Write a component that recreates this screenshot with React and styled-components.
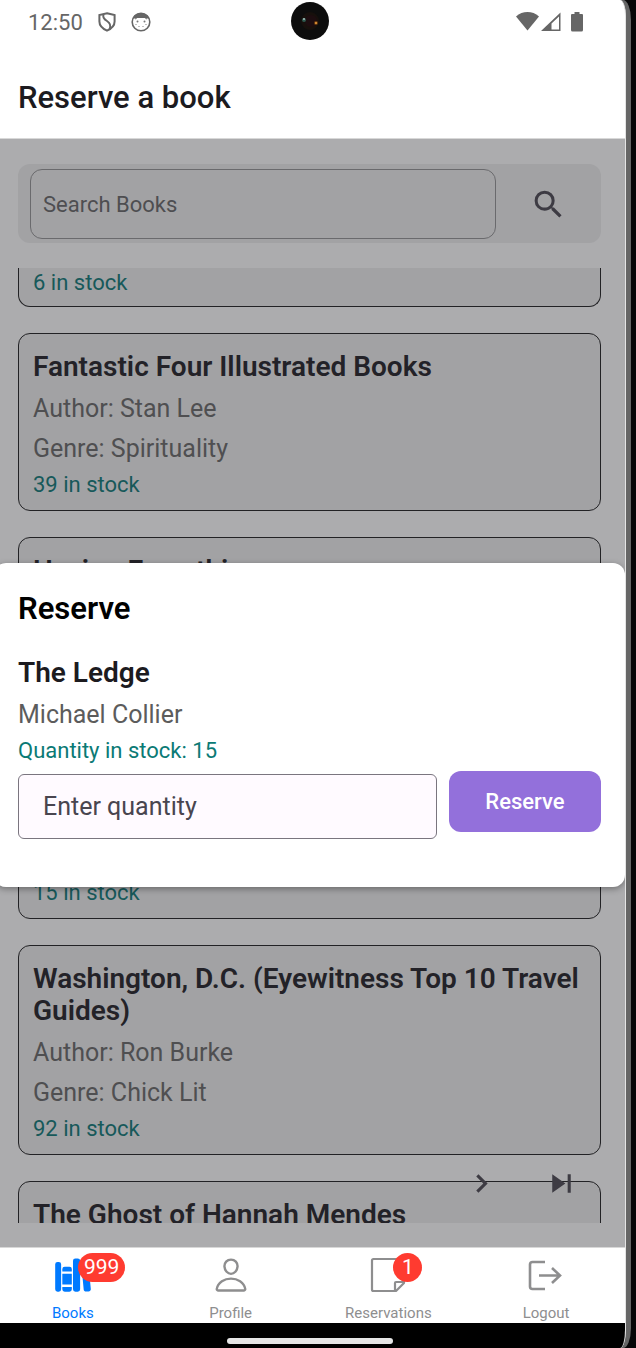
import React from "react";
import styled, { createGlobalStyle } from "styled-components";
import { MdSearch, MdChevronRight, MdSkipNext } from "react-icons/md";
import { IoLibrary, IoPersonOutline } from "react-icons/io5";

const GlobalStyle = createGlobalStyle`
  *, *::before, *::after { box-sizing: border-box; }
  body {
    margin: 0;
    background: #070708;
    font-family: Roboto, "Liberation Sans", sans-serif;
    overflow: hidden;
  }
  h1, h2, h3, p { margin: 0; }
`;

const Device = styled.div`
  height: 100vh;
  margin: 0 5px 0 -6px;
  padding-right: 5px;
  background: #666;
  border-radius: 0 8px 8px 0 / 0 20px 20px 0;
`;

const Screen = styled.div`
  position: relative;
  height: 100%;
  display: flex;
  flex-direction: column;
  overflow: hidden;
  background: #fff;
  border-right: 1px solid #e4e4e4;
  border-radius: 0 6px 6px 0 / 0 16px 18px 0;
`;

const StatusBar = styled.div`
  display: flex;
  align-items: center;
  justify-content: space-between;
  height: 44px;
  padding: 0 42px 0 34px;
  color: #666;
  font-size: 22px;
`;

const StatusGroup = styled.div`
  display: flex;
  align-items: center;
  gap: ${(p) => p.$gap}px;
`;

const Camera = styled.svg`
  position: absolute;
  top: 2px;
  left: 50%;
  margin-left: -19px;
`;

const Header = styled.header`
  flex: none;
  height: 95px;
  padding: 38px 24px 0;
  border-bottom: 1px solid #d8d8d8;
`;

const HeaderTitle = styled.h1`
  color: #1c1b1f;
  font-size: 31px;
  line-height: 32px;
  font-weight: 500;
`;

const Content = styled.main`
  position: relative;
  flex: 1;
  min-height: 0;
  display: flex;
  flex-direction: column;
  gap: 25px;
  padding: 25px 24px 24px;
  background: #acacae;
`;

const SearchBar = styled.form`
  display: flex;
  flex: none;
  height: 79px;
  padding: 5px 0 4px 12px;
  background: #a2a2a4;
  border-radius: 12px;
`;

const SearchInput = styled.input`
  flex: 1;
  min-width: 0;
  padding: 0 12px;
  background: transparent;
  border: 1px solid #6a6a6d;
  border-radius: 12px;
  font: 22px Roboto, sans-serif;
  color: #4e4e51;
  &::placeholder { color: #4e4e51; opacity: 1; }
`;

const IconButton = styled.button`
  display: grid;
  place-items: center;
  width: ${(p) => p.$width}px;
  padding: 0;
  border: 0;
  background: none;
  color: #3d3b43;
`;

const BookList = styled.ul`
  flex: 1;
  min-height: 0;
  display: flex;
  flex-direction: column;
  gap: 26px;
  margin: 0;
  padding: 0;
  overflow: hidden;
  list-style: none;
`;

const Card = styled.li`
  flex: none;
  display: flex;
  flex-direction: column;
  min-height: ${(p) => (p.$continued ? 39 : 178)}px;
  padding: ${(p) => (p.$continued ? 0 : 17)}px 14px 9px;
  background: #a2a2a4;
  border: 1px solid #222225;
  border-top-width: ${(p) => (p.$continued ? 0 : 1)}px;
  border-radius: ${(p) => (p.$continued ? "0 0 12px 12px" : "12px")};
`;

const BookTitle = styled.h3`
  margin-bottom: 6px;
  color: ${(p) => (p.$bright ? "#1c1b1f" : "#232228")};
  font-size: 28px;
  line-height: 32px;
  font-weight: 600;
`;

const BookDetail = styled.p`
  color: ${(p) => (p.$bright ? "#5c5c5c" : "#4f4f51")};
  font-size: 25px;
  line-height: 40px;
`;

const Stock = styled.p`
  margin-top: auto;
  color: ${(p) => (p.$bright ? "#0b7a75" : "#17595a")};
  font-size: 22px;
  line-height: ${(p) => (p.$continued ? 28 : 32)}px;
`;

const Pager = styled.div`
  position: absolute;
  right: 24px;
  bottom: 44px;
  display: flex;
  height: 40px;
`;

const ModalLayer = styled.div`
  position: absolute;
  inset: 0;
  display: flex;
  align-items: flex-end;
  padding-bottom: 360px;
  pointer-events: none;
`;

const Modal = styled.section`
  flex: 1;
  padding: 30px 24px 48px;
  background: #fff;
  border-radius: 12px;
  box-shadow: 0 2px 6px rgba(0, 0, 0, 0.35);
  pointer-events: auto;
`;

const ModalTitle = styled.h2`
  margin-bottom: 32px;
  color: #000;
  font-size: 31px;
  line-height: 32px;
  font-weight: 600;
`;

const ReserveForm = styled.form`
  display: flex;
  align-items: flex-start;
  gap: 12px;
  padding-top: 4px;
`;

const QuantityInput = styled.input`
  flex: 1;
  min-width: 0;
  height: 65px;
  margin-top: 3px;
  padding: 0 24px;
  background: #fffaff;
  border: 1px solid #7a757f;
  border-radius: 6px;
  font: 25px Roboto, sans-serif;
  color: #49454f;
  &::placeholder { color: #49454f; opacity: 1; }
`;

const ReserveButton = styled.button`
  width: 152px;
  height: 61px;
  padding: 0;
  border: 0;
  border-radius: 12px;
  background: #9370db;
  color: #fff;
  font: 500 22px Roboto, sans-serif;
`;

const TabBar = styled.nav`
  flex: none;
  display: flex;
  height: 76px;
  border-top: 1px solid #d8d8d8;
  background: #fff;
`;

const Tab = styled.a`
  flex: 1;
  display: flex;
  flex-direction: column;
  align-items: center;
  gap: 7px;
  padding-top: 8px;
  color: ${(p) => (p.$active ? "#007aff" : "#8e8e8f")};
  font-size: 15px;
  line-height: 24px;
  text-decoration: none;
`;

const TabIcon = styled.span`
  position: relative;
  width: 38px;
  height: 38px;
  font-size: 38px;
  line-height: 0;
`;

const Badge = styled.span`
  position: absolute;
  top: -3px;
  left: 24px;
  min-width: 29px;
  height: 29px;
  padding: 0 6px;
  border-radius: 15px;
  background: #ff3b30;
  color: #fff;
  font-size: 21px;
  line-height: 28px;
  text-align: center;
`;

const SystemNav = styled.div`
  flex: none;
  display: flex;
  justify-content: center;
  height: 25px;
  padding-top: 15px;
  background: #000;
`;

const HomeHandle = styled.div`
  width: 166px;
  height: 6px;
  border-radius: 3px;
  background: #e6e6e6;
`;

const ShieldIcon = () => (
  <svg width="18" height="20" viewBox="0 0 18 20" fill="none" stroke="#666" strokeWidth="2">
    <path d="M9 1.2 16.6 3v6.5c0 4.3-3.4 7.3-7.6 9.2C4.800 16.800 1.400 13.800 1.400 9.500V3Z" />
    <path d="M5.500 2.500c-1.200 3.500.8 5 3.500 6.500 3.200 2 4.200 4.500 2.600 8.500" />
  </svg>
);

const FaceIcon = () => (
  <svg width="20" height="20" viewBox="0 0 20 20">
    <circle cx="10" cy="10" r="8.800" fill="#fff" stroke="#666" strokeWidth="1.600" />
    <path d="M1.800 6.500C4-.5 16-.5 18.200 6.500H15.500V7.800L14 6H6L4.500 7.800V6.500Z" fill="#666" />
    <g fill="#777">
      <circle cx="6.500" cy="9.500" r="1" /><circle cx="13.500" cy="9.500" r="1" />
      <circle cx="5" cy="12.500" r=".6" /><circle cx="15" cy="12.500" r=".6" />
      <circle cx="8" cy="14.500" r=".6" /><circle cx="12" cy="14.500" r=".6" />
    </g>
  </svg>
);

const SignalIcons = () => (
  <svg width="45" height="20" viewBox="0 0 45 20" fill="#666">
    <path d="M0 4.500C6.500-1.400 16.500-1.400 23 4.500L11.500 18.500Z" />
    <path fillRule="evenodd" d="M25 19 44.500.5V19ZM35.500 17.500H43V4.500L35.500 11.500Z" />
  </svg>
);

const BatteryIcon = () => (
  <svg width="12" height="20" viewBox="0 0 12 20" fill="#666">
    <path d="M3.500 0h5v2H11q1 0 1 1v15q0 1.500-1.500 1.500h-9Q0 19.500 0 18V3q0-1 1-1h2.500Z" />
  </svg>
);

const NoteIcon = () => (
  <svg width="38" height="38" viewBox="0 0 38 38" fill="none" stroke="currentColor" strokeWidth="2.200" strokeLinejoin="round">
    <path d="M35 26V4.500Q35 3 33.500 3h-29Q3 3 3 4.500v29Q3 35 4.500 35H27L35 27V26H27q-1 0-1 1v8" />
  </svg>
);

const LogoutIcon = () => (
  <svg width="38" height="38" viewBox="0 0 38 38" fill="none" stroke="currentColor" strokeWidth="2.600">
    <path d="M18 6H5.500Q3 6 3 8.500v22Q3 33 5.500 33H18M12 19.500h21.500M25 12l8 7.500-8 7.500" />
  </svg>
);

const CameraLens = () => (
  <Camera width="38" height="38" viewBox="0 0 38 38" aria-hidden="true">
    <circle cx="19" cy="19" r="19" fill="#0d0d0d" />
    <circle cx="19" cy="19" r="9" fill="#17100c" />
    <circle cx="20" cy="19" r="6" fill="#1d0d10" />
    <circle cx="13" cy="18" r="2" fill="#2f5a50" />
    <circle cx="13" cy="17" r="1" fill="#a8c0bb" />
    <circle cx="25" cy="21" r="2" fill="#6b3c10" />
    <circle cx="25" cy="21" r="1" fill="#f0a13c" />
  </Camera>
);

const books = [
  { stock: 6, continued: true },
  { title: "Fantastic Four Illustrated Books", author: "Stan Lee", genre: "Spirituality", stock: 39 },
  { title: "Having Everything" },
  { stock: 15 },
  {
    title: "Washington, D.C. (Eyewitness Top 10 Travel Guides)",
    author: "Ron Burke",
    genre: "Chick Lit",
    stock: 92,
  },
  { title: "The Ghost of Hannah Mendes" },
];

const tabs = [
  { label: "Books", icon: <IoLibrary />, badge: 999, active: true },
  { label: "Profile", icon: <IoPersonOutline /> },
  { label: "Reservations", icon: <NoteIcon />, badge: 1 },
  { label: "Logout", icon: <LogoutIcon /> },
];

const BookCard = ({ title, author, genre, stock, continued }) => (
  <Card $continued={continued}>
    {title && <BookTitle>{title}</BookTitle>}
    {author && <BookDetail>Author: {author}</BookDetail>}
    {genre && <BookDetail>Genre: {genre}</BookDetail>}
    {stock && <Stock $continued={continued}>{stock} in stock</Stock>}
  </Card>
);

export default function App() {
  const stop = (e) => e.preventDefault();
  return (
    <>
      <GlobalStyle />
      <Device>
        <Screen>
          <StatusBar>
            <StatusGroup $gap={15}>
              <span>12:50</span>
              <ShieldIcon />
              <FaceIcon />
            </StatusGroup>
            <CameraLens />
            <StatusGroup $gap={10}>
              <SignalIcons />
              <BatteryIcon />
            </StatusGroup>
          </StatusBar>
          <Header>
            <HeaderTitle>Reserve a book</HeaderTitle>
          </Header>
          <Content>
            <SearchBar onSubmit={stop}>
              <SearchInput type="text" placeholder="Search Books" aria-label="Search Books" />
              <IconButton $width={105} type="submit" aria-label="Search">
                <MdSearch size={37} />
              </IconButton>
            </SearchBar>
            <BookList>
              {books.map((book, i) => (
                <BookCard key={i} {...book} />
              ))}
            </BookList>
            <Pager>
              <IconButton $width={80} type="button" aria-label="Next page">
                <MdChevronRight size={37} />
              </IconButton>
              <IconButton $width={80} type="button" aria-label="Last page">
                <MdSkipNext size={37} />
              </IconButton>
            </Pager>
            <ModalLayer>
              <Modal role="dialog" aria-labelledby="reserve-title">
                <ModalTitle id="reserve-title">Reserve</ModalTitle>
                <BookTitle $bright>The Ledge</BookTitle>
                <BookDetail $bright>Michael Collier</BookDetail>
                <Stock $bright>Quantity in stock: 15</Stock>
                <ReserveForm onSubmit={stop}>
                  <QuantityInput type="text" placeholder="Enter quantity" aria-label="Enter quantity" />
                  <ReserveButton type="submit">Reserve</ReserveButton>
                </ReserveForm>
              </Modal>
            </ModalLayer>
          </Content>
          <TabBar>
            {tabs.map((tab) => (
              <Tab key={tab.label} href={`#${tab.label.toLowerCase()}`} $active={tab.active}>
                <TabIcon>
                  {tab.icon}
                  {tab.badge && <Badge>{tab.badge}</Badge>}
                </TabIcon>
                {tab.label}
              </Tab>
            ))}
          </TabBar>
          <SystemNav>
            <HomeHandle />
          </SystemNav>
        </Screen>
      </Device>
    </>
  );
}
